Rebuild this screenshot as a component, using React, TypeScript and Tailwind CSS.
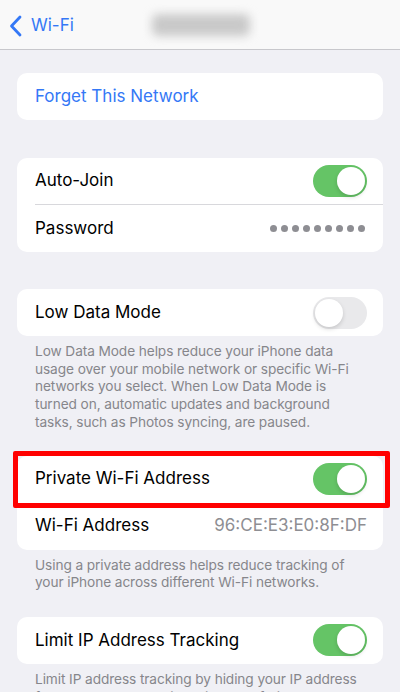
import React from "react";

const font = { fontFamily: "Inter, 'Noto Sans', sans-serif" };

function Toggle({ on }: { on: boolean }) {
  return on ? (
    <div className="w-[54px] h-[32px] rounded-full bg-[#65c466] flex items-center justify-end px-[2px]">
      <div className="w-[28px] h-[28px] rounded-full bg-white shadow-[0_2px_4px_rgba(0,0,0,0.15)]" />
    </div>
  ) : (
    <div className="w-[54px] h-[32px] rounded-full bg-[#e9e9eb] flex items-center justify-start px-[2px]">
      <div className="w-[28px] h-[28px] rounded-full bg-white shadow-[0_2px_4px_rgba(0,0,0,0.15)]" />
    </div>
  );
}

function Row({ label, right, divider }: { label: string; right?: React.ReactNode; divider?: boolean }) {
  return (
    <div className="flex">
      <div className={`flex-1 flex items-center justify-between h-[47px] ml-[18px] pr-[16px] ${divider ? "border-b border-[#d8d8dc]" : ""}`}>
        <span className="text-[17px] text-black">{label}</span>
        {right}
      </div>
    </div>
  );
}

function Footer({ children }: { children: React.ReactNode }) {
  return (
    <div className="px-[35px] pt-[7px] text-[13.7px] leading-[17.7px] text-[#86868b] tracking-[-0.1px]">
      {children}
    </div>
  );
}

export default function App() {
  return (
    <div className="w-[400px] h-[692px] overflow-hidden bg-[#f0f0f5]" style={font}>
      <div className="h-[50px] bg-[#f9f9f9] border-b border-[#c8c8cc] flex items-center relative">
        <svg width="16" height="22" viewBox="0 0 16 22" className="ml-[8px] mt-[3px]">
          <path d="M12 2 L3.5 11 L12 20" stroke="#3478f6" strokeWidth="2.8" fill="none" strokeLinecap="round" strokeLinejoin="round" />
        </svg>
        <span className="ml-[7px] mt-[3px] text-[17px] text-[#3478f6]">Wi-Fi</span>
        <div className="absolute left-[152px] top-[14px] w-[98px] h-[22px] rounded-[6px] bg-[#c9c9c9] blur-[5px]" />
      </div>

      <div className="mt-[23px] mx-[17px] bg-white rounded-[10px] h-[47px] flex items-center px-[18px]">
        <span className="text-[17px] text-[#3478f6]">Forget This Network</span>
      </div>

      <div className="mt-[38px] mx-[17px] bg-white rounded-[10px]">
        <Row label="Auto-Join" right={<Toggle on />} divider />
        <Row
          label="Password"
          right={
            <div className="flex gap-[4px] pr-[2px]">
              {Array.from({ length: 9 }).map((_, i) => (
                <div key={i} className="w-[7px] h-[7px] rounded-full bg-[#8e8e93]" />
              ))}
            </div>
          }
        />
      </div>

      <div className="mt-[37px] mx-[17px] bg-white rounded-[10px]">
        <Row label="Low Data Mode" right={<Toggle on={false} />} />
      </div>
      <Footer>
        Low Data Mode helps reduce your iPhone data usage over your mobile network or specific Wi-Fi networks you select. When Low Data Mode is turned on, automatic updates and background tasks, such as Photos syncing, are paused.
      </Footer>

      <div className="mt-[24px] mx-[17px] bg-white rounded-[10px] relative">
        <div className="absolute left-[-4px] right-[-7px] top-[-5px] h-[57px] border-[5px] border-[#ff0000] rounded-[2px] pointer-events-none" />
        <Row label="Private Wi-Fi Address" right={<Toggle on />} />
        <Row label="Wi-Fi Address" right={<span className="text-[17px] text-[#8e8e93]">96:CE:E3:E0:8F:DF</span>} />
      </div>
      <Footer>
        Using a private address helps reduce tracking of your iPhone across different Wi-Fi networks.
      </Footer>

      <div className="mt-[25px] mx-[17px] bg-white rounded-[10px]">
        <Row label="Limit IP Address Tracking" right={<Toggle on />} />
      </div>
      <Footer>
        Limit IP address tracking by hiding your IP address from known trackers in Mail and Safari.
      </Footer>
    </div>
  );
}
